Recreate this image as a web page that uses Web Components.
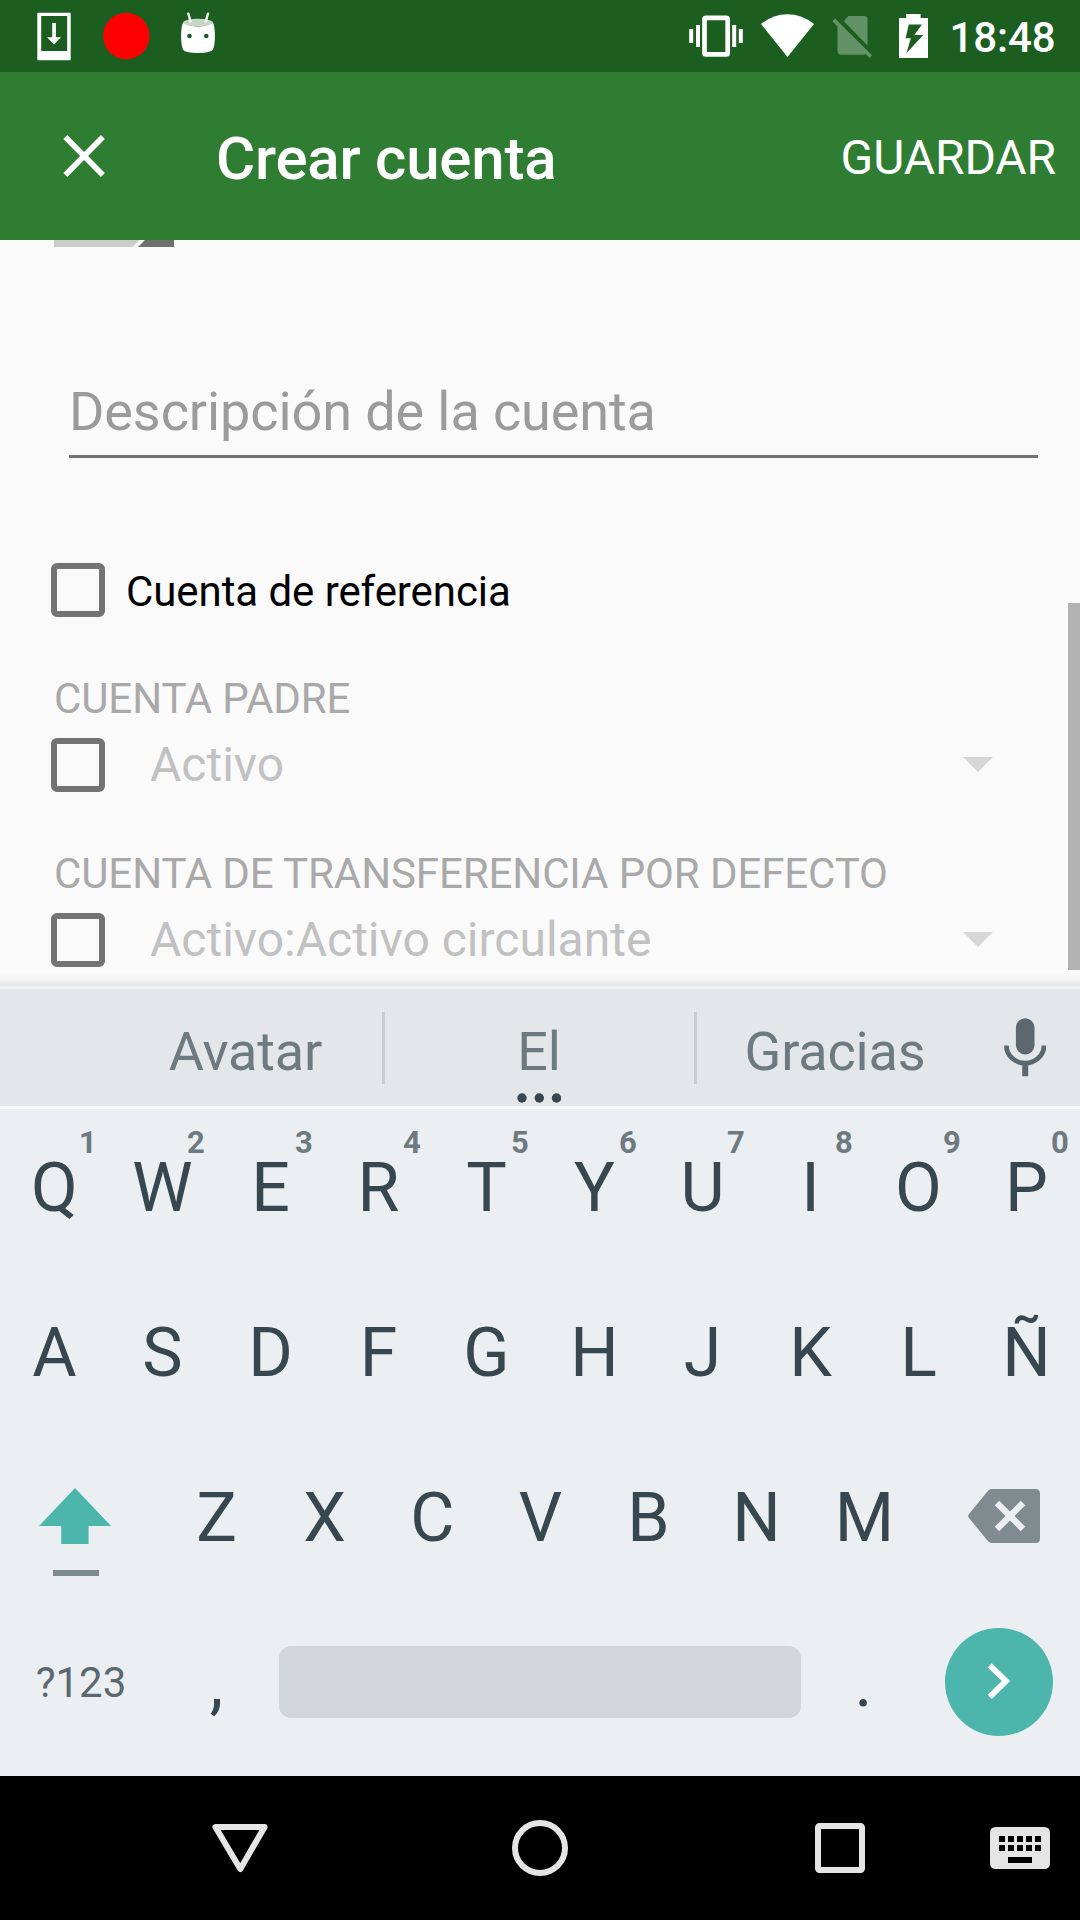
<!DOCTYPE html>
<html lang="es">
<head>
<meta charset="utf-8">
<title>Crear cuenta</title>
<style>
html,body{margin:0;padding:0}
body{width:1080px;height:1920px;overflow:hidden;background:#fafafa;font-family:Roboto,"Noto Sans",sans-serif}
</style>
</head>
<body>
<account-screen></account-screen>
<script>
const define=(name,css,html)=>customElements.define(name,class extends HTMLElement{
  constructor(){
    super();
    this.attachShadow({mode:'open'}).innerHTML='<style>*{box-sizing:border-box}'+css+'</style>'+(typeof html==='function'?html(this):html);
  }
});

/* name: [x, y, width, height, drawing]; coordinates are those of the 1080x1920 screen */
const ICONS={
  download:[37,0,34,72,'<path fill="#fff" fill-rule="evenodd" d="M38 12.7h32q.7 0 .7.7v46.2q0 .7-.7.7H38q-.7 0-.7-.7V13.400q0-.7.7-.7zM41.200 16v35H67.200V16z"/><path fill="#fff" d="M52.200 23h3.700v14.300h5L54 44.400l-7-7.100h5.200z"/>'],
  record:[103,0,47,72,'<circle cx="126.300" cy="36" r="23.200" fill="#f00"/>'],
  robot:[181,0,34,72,'<path fill="#fff" d="M183 22.500Q198 30.500 213 22.500Q214.900 27 214.900 36Q214.900 45 213 49.500Q211.500 52.900 198 52.900Q184.500 52.900 183 49.500Q181.100 45 181.100 36Q181.100 27 183 22.500z"/><ellipse cx="198" cy="22.600" rx="15" ry="3.800" fill="#c6d7c7"/><path d="M188.400 13.700l2 7.500M208 13.700l-2.200 7.500" stroke="#fff" stroke-width="2.400" stroke-linecap="round"/><circle cx="189.500" cy="36" r="2.300" fill="#1b5e20"/><circle cx="206.300" cy="36" r="2.300" fill="#1b5e20"/>'],
  vibrate:[689,0,54,72,'<rect x="704.500" y="17.800" width="23.200" height="36.600" rx="1.500" fill="none" stroke="#fff" stroke-width="4.700"/><path fill="#fff" d="M696 25h4v22h-4zM689.200 29h4v14h-4zM732.200 25h4v22h-4zM738.800 29h4v14h-4z"/>'],
  wifi:[761,0,53,72,'<path fill="#fff" d="M761 24Q773 14.200 787.500 14.200T814 24L787.500 57z"/>'],
  nosim:[832,0,41,72,'<path fill="#629265" d="M848.500 16H864q3.500 0 3.500 3.500V45.500L843.800 21.300z"/><path fill="#629265" d="M835 18.500L872 55.300L869.700 58L865.700 54Q865 54.800 863.500 54.800H841.500Q837.500 54.800 837.500 51V26.500L832.400 21.200z"/>'],
  battery:[899,0,29,72,'<path fill="#fff" fill-rule="evenodd" d="M906.200 14h14.400v4h7.400v40h-29V18h7.200zM908.800 24.500L905.600 38.300h5.200L906.500 53L923.300 35h-9L921.900 24.500z"/>'],
  close:[63,72,42,168,'<path d="M65.300 137l37.600 38M102.900 137l-37.600 38" stroke="#fff" stroke-width="5.600"/>'],
  thumb:[54,240,120,7,'<path fill="#ccc" d="M54 240h86l-7.500 7H54z"/><path fill="#f5f5f5" d="M140 240h5l-7 7h-5.500z"/><path fill="#707070" d="M145 240h29v7h-36z"/>'],
  caret:[963,0,30,54,'<path fill="#d6d6d6" d="M963 19h30l-15 15z"/>'],
  mic:[1004,989,42,117,'<rect x="1015.900" y="1018.200" width="18.600" height="36.200" rx="9.300" fill="#5b686f"/><path d="M1006.400 1045.500C1006.400 1055.500 1015 1063.200 1025.200 1063.200S1044 1055.500 1044 1045.500" fill="none" stroke="#5b686f" stroke-width="4.800"/><path fill="#5b686f" d="M1022.200 1064h6v12.200h-6z"/>'],
  shift:[39,1439,72,165,'<path fill="#4db6ac" d="M75 1488l36 38H88.600v18H61.200v-18H39z"/><path fill="#808b90" d="M53 1570h46v6H53z"/>'],
  backspace:[968,1439,72,165,'<path fill="#808b90" d="M991.500 1489H1035.500q4.500 0 4.500 4.500V1538.500q0 4.500-4.500 4.500H991.500q-2.500 0-4.500-3L968.600 1517.500q-.9-1.500 0-3L987 1492q2-3 4.500-3z"/><path d="M997 1503l26 26M1023 1503l-26 26" stroke="#ebeff2" stroke-width="6.300"/>'],
  enter:[945,1604,108,172,'<circle cx="999" cy="1682" r="54" fill="#4db6ac"/><path d="M989.700 1665.300L1006 1681l-16.300 15.900" fill="none" stroke="#fff" stroke-width="5.900"/>'],
  back:[212,1776,56,144,'<path d="M215.400 1827H264.600L240.300 1869z" fill="none" stroke="#e5e5e5" stroke-width="6" stroke-linejoin="round"/>'],
  home:[512,1776,56,144,'<circle cx="540" cy="1848" r="25" fill="none" stroke="#e5e5e5" stroke-width="6"/>'],
  recent:[815,1776,50,144,'<rect x="818" y="1826" width="44" height="44" rx="1.500" fill="none" stroke="#e5e5e5" stroke-width="6"/>'],
  keyboard:[990,1776,60,144,'<path fill="#e5e5e5" fill-rule="evenodd" d="M996 1827h48q6 0 6 6v30q0 6-6 6h-48q-6 0-6-6v-30q0-6 6-6z'+[0,1,2,3,4].map(i=>`M${999+9*i} 1836h6v6h-6zM${999+9*i} 1845h6v6h-6z`).join('')+'M1008 1857h24v6h-24z"/>']
};
define('ui-icon',':host{display:block;flex:none}svg{display:block}',el=>{
  const [x,y,w,h,d]=ICONS[el.getAttribute('name')];
  return `<svg width="${w}" height="${h}" viewBox="${x} ${y} ${w} ${h}">${d}</svg>`;
});

define('status-bar',`:host{display:flex;height:72px;background:#1b5e20;color:#fff;padding:0 24.500px 0 37px}
  .left{display:flex;gap:31px}.left :first-child{margin-right:1px}
  .right{display:flex;gap:18px;margin-left:auto}
  .sim{margin-right:8px}
  time{font-size:42px;font-weight:500;line-height:75px;letter-spacing:-.1px;width:109.500px;text-align:right;white-space:nowrap}`,
 `<div class="left"><ui-icon name="download"></ui-icon><ui-icon name="record"></ui-icon><ui-icon name="robot"></ui-icon></div>
  <div class="right"><ui-icon name="vibrate"></ui-icon><ui-icon name="wifi"></ui-icon><ui-icon class="sim" name="nosim"></ui-icon><ui-icon name="battery"></ui-icon><time>18:48</time></div>`);

define('app-bar',`:host{display:flex;height:168px;background:#2e7d32;color:#fff;padding:0 24px 0 63px}
  h1{margin:0 0 0 111px;font-size:60px;font-weight:500;line-height:173px;letter-spacing:-.22px;white-space:nowrap}
  .action{margin-left:auto;font-size:48px;line-height:171px;letter-spacing:-.1px}`,
 `<ui-icon name="close"></ui-icon><h1><slot></slot></h1><div class="action"><slot name="action"></slot></div>`);

define('check-box',`:host{display:block;flex:none;width:54px;height:54px;border:6px solid #737373;border-radius:6px}`,'');

define('text-field',`:host{display:block;margin:137px 42px 0 69px;height:74px;border-bottom:3px solid #727272;color:#9b9b9b;font-size:54px;line-height:55px;letter-spacing:-.1px}`,'<slot></slot>');

define('check-row',`:host{display:flex;margin:105px 0 0 51px;height:54px;color:#000;font-size:42px;line-height:57px;letter-spacing:-.07px}span{margin-left:21px}`,
 '<check-box></check-box><span><slot></slot></span>');

define('account-select',`:host{display:block;height:175px;padding-left:51px}
  .label{height:65px;padding-left:3px;font-size:42px;line-height:51px;letter-spacing:-.1px;color:#a9a9a9;white-space:nowrap}
  .row{display:flex;height:54px;font-size:48px;line-height:53px;color:#c1c1c1;padding-right:87px}
  .value{margin-left:45px;flex:1}`,
 '<div class="label"><slot name="label"></slot></div><div class="row"><check-box></check-box><div class="value"><slot></slot></div><ui-icon name="caret"></ui-icon></div>');

define('account-form',`:host{display:block;position:relative;height:746px;background:#fafafa;overflow:hidden}
  ui-icon{margin-left:54px}
  .selects{margin-top:56px}
  .bar{position:absolute;right:0;top:363px;width:12px;height:367px;background:#b2b2b2}
  .shade{position:absolute;left:0;right:0;bottom:0;height:14px;background:linear-gradient(rgba(0,0,0,0),rgba(0,0,0,.025) 50%,rgba(0,0,0,.085))}`,
 `<ui-icon name="thumb"></ui-icon><text-field>Descripción de la cuenta</text-field><check-row>Cuenta de referencia</check-row>
  <div class="selects"><account-select><span slot="label">CUENTA PADRE</span>Activo</account-select>
  <account-select><span slot="label">CUENTA DE TRANSFERENCIA POR DEFECTO</span>Activo:Activo circulante</account-select></div>
  <div class="bar"></div><div class="shade"></div>`);

define('suggestion-strip',`:host{display:flex;height:123px;background:#e3e7ea;border-top:3px solid #eef0f3;border-bottom:3px solid #f6f8fa;color:#6d7a80;font-size:54px;line-height:125px;letter-spacing:-.15px;padding-left:109px}
  div{text-align:center;position:relative}
  .a{width:273px}.b{width:309px;padding-right:1px}.c{width:276px}
  i{width:3px;height:72px;margin-top:23px;background:#c9ced1}
  ui-icon{margin-left:31px}
  svg{position:absolute;left:132px;top:104px}`,
 `<div class="a">Avatar</div><i></i><div class="b">El<svg width="44" height="10" fill="#37474f"><circle cx="5" cy="5" r="4.700"/><circle cx="22.300" cy="5" r="4.700"/><circle cx="39.500" cy="5" r="4.700"/></svg></div><i></i><div class="c">Gracias</div><ui-icon name="mic"></ui-icon>`);

define('kb-key',`:host{display:block;position:relative;flex:none;width:108px;height:100%;padding-left:1px;text-align:center;font-size:68px;line-height:159px;color:#37474f}
  b{position:absolute;left:68px;top:0;width:40px;font-size:31px;line-height:67px;color:#6d7a80}`,
 el=>'<slot></slot>'+(el.hasAttribute('hint')?`<b>${el.getAttribute('hint')}</b>`:''));

define('soft-keyboard',`:host{display:block;height:667px;background:#ebeff2}
  kb-key{box-sizing:border-box}
  .row{display:flex;height:165px}.row.last{height:172px}
  .m{margin-left:50px}
  .sym{width:162px;text-align:center;font-size:42px;line-height:157px;color:#5b686f}
  .space{width:522px;height:72px;margin:42px 8px 0 9px;border-radius:12px;background:#d1d6d9}`,
 ()=>{
  const keys=s=>[...s].map(c=>`<kb-key>${c}</kb-key>`).join('');
  return `<div class="row">${[...'QWERTYUIOP'].map((c,i)=>`<kb-key hint="${(i+1)%10}">${c}</kb-key>`).join('')}</div>
  <div class="row">${keys('ASDFGHJKLÑ')}</div>
  <div class="row"><ui-icon name="shift" style="margin:0 51px 0 39px"></ui-icon>${keys('ZXCVBNM')}<ui-icon class="m" name="backspace"></ui-icon></div>
  <div class="row last"><div class="sym">?123</div>${keys(',')}<div class="space"></div>${keys('.')}<ui-icon name="enter" style="margin-left:28px"></ui-icon></div>`;
 });

define('nav-bar',`:host{display:flex;height:144px;background:#000;padding-left:212px}.h{margin:0 247px 0 244px}.k{margin-left:125px}`,
 '<ui-icon name="back"></ui-icon><ui-icon class="h" name="home"></ui-icon><ui-icon name="recent"></ui-icon><ui-icon class="k" name="keyboard"></ui-icon>');

define('account-screen',':host{display:flex;flex-direction:column;width:1080px;height:1920px;overflow:hidden}:host>*{flex:none}',
 `<status-bar></status-bar><app-bar>Crear cuenta<span slot="action">GUARDAR</span></app-bar><account-form></account-form><suggestion-strip></suggestion-strip><soft-keyboard></soft-keyboard><nav-bar></nav-bar>`);
</script>
</body>
</html>
